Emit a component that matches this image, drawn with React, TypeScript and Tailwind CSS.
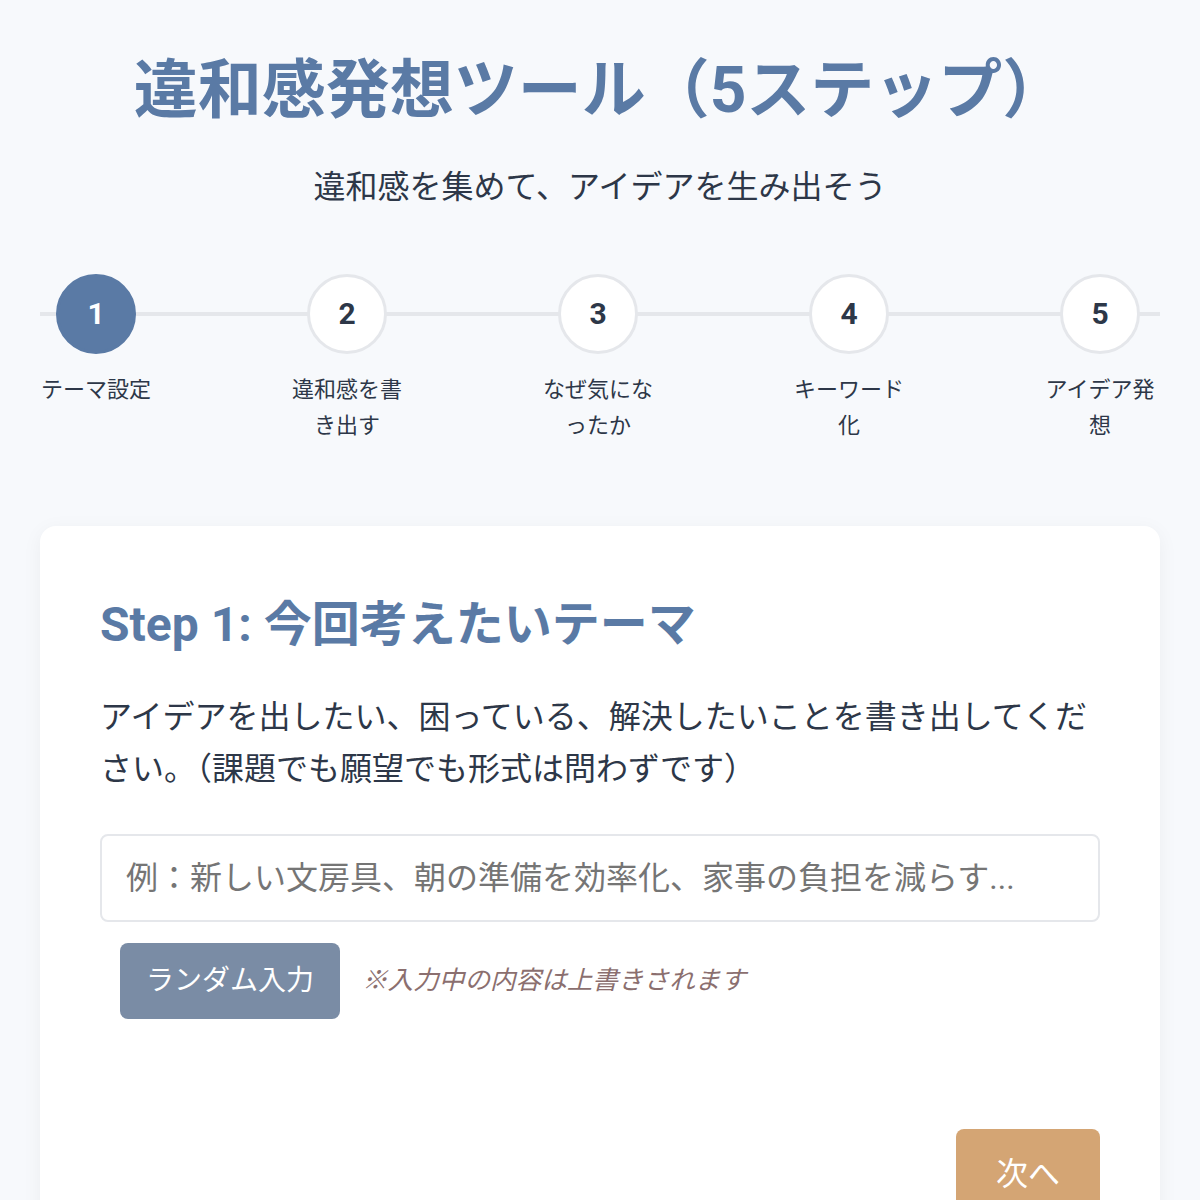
const steps = [
  { n: 1, label: "テーマ設定" },
  { n: 2, label: "違和感を書き出す" },
  { n: 3, label: "なぜ気になったか" },
  { n: 4, label: "キーワード化" },
  { n: 5, label: "アイデア発想" },
];

const FONT = "font-['Roboto','Noto_Sans_CJK_JP',sans-serif]";

export default function App() {
  const current = 1;

  return (
    <div className={`min-h-[1200px] bg-[#f7f9fc] text-[#2d3748] ${FONT}`}>
      <div className="mx-auto max-w-[1200px] px-10 pt-[53px]">
        <header className="text-center">
          <h1 className="text-[64px] font-bold leading-[1.2] text-[#5a7aa5]">
            違和感発想ツール（5ステップ）
          </h1>
          <p className="mt-8 text-[32px] leading-[1.6] text-[#2d3748]">
            違和感を集めて、アイデアを生み出そう
          </p>
        </header>

        {/* progress */}
        <div className="relative mt-[61px] flex justify-between pr-1">
          <div className="absolute left-0 right-0 top-[38px] h-1 bg-[#e5e7eb]" />
          {steps.map((s) => (
            <div key={s.n} className="relative flex w-[112px] flex-col items-center">
              <div
                className={
                  s.n === current
                    ? "flex h-20 w-20 items-center justify-center rounded-full border-[3px] border-[#5a7aa5] bg-[#5a7aa5] text-[30px] font-bold text-white"
                    : "flex h-20 w-20 items-center justify-center rounded-full border-[3px] border-[#e5e7eb] bg-white text-[30px] font-bold text-[#2d3748]"
                }
              >
                {s.n}
              </div>
              <div className="mt-[18px] text-center text-[22px] leading-[36px] text-[#2d3748]">
                {s.label}
              </div>
            </div>
          ))}
        </div>

        {/* card */}
        <div className="mt-[82px] rounded-2xl bg-white px-[60px] pb-16 pt-[70px] shadow-[0_4px_20px_rgba(0,0,0,0.05)]">
          <h2 className="text-[48px] font-bold leading-[1.2] text-[#5a7aa5]">
            Step 1: 今回考えたいテーマ
          </h2>
          <p className="mt-[37px] text-[32px] leading-[52px] text-[#2d3748]">
            アイデアを出したい、困っている、解決したいことを書き出してください。（課題でも願望でも形式は問わずです）
          </p>
          <input
            type="text"
            placeholder="例：新しい文房具、朝の準備を効率化、家事の負担を減らす..."
            className="mt-[39px] block h-[88px] w-full rounded-lg border-2 border-[#e5e7eb] bg-white px-6 text-[32px] text-[#2d3748] outline-none placeholder:text-[#757575]"
          />
          <div className="ml-5 mt-[21px] flex items-center gap-[22px]">
            <button className="rounded-lg bg-[#7a8ca5] px-[26px] py-6 text-[28px] leading-[28px] text-white">
              ランダム入力
            </button>
            <span className="text-[25.6px] italic text-[#8b6f6f]">※入力中の内容は上書きされます</span>
          </div>
          <div className="mt-[110px] flex justify-end">
            <button className="rounded-lg bg-[#d4a574] px-10 py-[29px] text-[32px] leading-8 text-white">
              次へ
            </button>
          </div>
        </div>
      </div>
    </div>
  );
}
